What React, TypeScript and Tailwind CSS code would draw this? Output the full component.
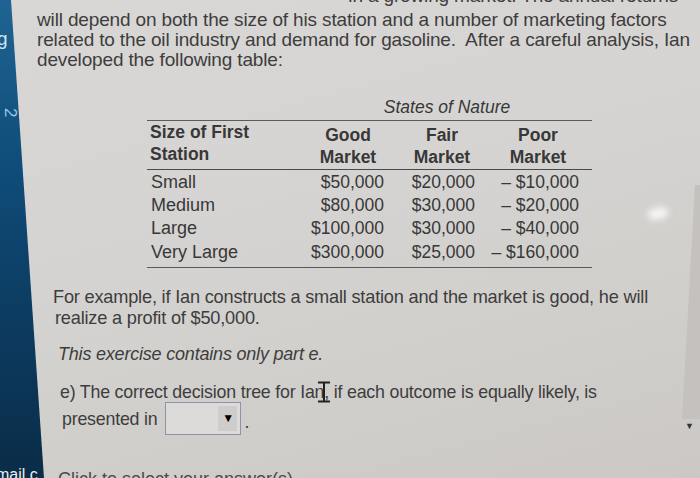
const rows = [
  { size: "Small", good: "$50,000", fair: "$20,000", poor: "– $10,000" },
  { size: "Medium", good: "$80,000", fair: "$30,000", poor: "– $20,000" },
  { size: "Large", good: "$100,000", fair: "$30,000", poor: "– $40,000" },
  { size: "Very Large", good: "$300,000", fair: "$25,000", poor: "– $160,000" },
];

function Cursor() {
  return (
    <svg className="absolute left-[317px] top-[381px]" width="14" height="23" viewBox="0 0 14 23">
      <path d="M1 1.5h12M7 1.5v19M1 20.5h12" stroke="#222" strokeWidth="2" fill="none" />
    </svg>
  );
}

export default function App() {
  return (
    <div
      className="relative w-[700px] h-[478px] overflow-hidden bg-[linear-gradient(180deg,#1f6492_0%,#0f4c79_35%,#0c3a5e_70%,#0a2c47_100%)]"
      style={{ fontFamily: '"Liberation Sans", Arial, sans-serif' }}
    >
      {/* sidebar bits peeking out */}
      <span className="absolute left-[-3px] top-[25px] text-[19px] text-[#cfe3f2]">g</span>
      <span className="absolute left-[6px] top-[100px] text-[17px] text-[#9ec6e6] rotate-90">2</span>
      <span className="absolute left-[-4px] top-[463px] text-[16px] text-[#e6eef5]">mail c</span>

      {/* question panel */}
      <div className="flex h-full flex-col bg-[linear-gradient(165deg,#d9d7d5_0%,#d6d4d2_40%,#d1cfcc_70%,#cbc8c5_100%)] [clip-path:polygon(11px_0,100%_0,100%_100%,44px_100%)] text-[#3d3d3d]">
        <div className="relative flex h-full flex-col">
          <div className="pl-[37px] mt-[-18px] text-[19px] leading-[20px] tracking-[-0.15px]">
            <p className="whitespace-nowrap text-right pr-[22px] leading-[28px]">in a growing market. The annual returns</p>
            <p className="whitespace-nowrap">will depend on both the size of his station and a number of marketing factors</p>
            <p className="whitespace-nowrap">related to the oil industry and demand for gasoline.&nbsp; After a careful analysis, Ian</p>
            <p className="whitespace-nowrap">developed the following table:</p>
          </div>

          {/* payoff table */}
          <div className="ml-[147px] mt-[26px] w-[445px] text-[17.5px] text-[#383838]">
            <div className="pl-[234px] w-[366px] text-center italic leading-[22px]">States of Nature</div>
            <div className="border-t-[1.5px] border-[#5a5a5a] mt-[2px]" />
            <div className="flex leading-[22px]">
              <div className="w-[153px] pl-[3px] font-bold">
                <div>Size of First</div>
                <div>Station</div>
              </div>
              <div className="w-[96px] text-center font-bold pt-[3px]">
                <div>Good</div>
                <div>Market</div>
              </div>
              <div className="w-[92px] text-center font-bold pt-[3px]">
                <div>Fair</div>
                <div>Market</div>
              </div>
              <div className="w-[100px] text-center font-bold pt-[3px]">
                <div>Poor</div>
                <div>Market</div>
              </div>
            </div>
            <div className="border-t-[1.5px] border-[#4a4a4a] mt-[1px]" />
            <div className="leading-[23.2px] pt-[1px] pb-[3px]">
              {rows.map((r) => (
                <div key={r.size} className="grid grid-cols-[153px_84px_91px_104px]">
                  <div className="pl-[4px] text-[18px]">{r.size}</div>
                  <div className="text-right">{r.good}</div>
                  <div className="text-right">{r.fair}</div>
                  <div className="text-right">{r.poor}</div>
                </div>
              ))}
            </div>
            <div className="border-t-[1.5px] border-[#5a5a5a]" />
          </div>

          <div className="pl-[53px] mt-[19px] text-[18.2px] leading-[21px] tracking-[-0.2px]">
            <p className="whitespace-nowrap">For example, if Ian constructs a small station and the market is good, he will</p>
            <p className="whitespace-nowrap pl-[2px]">realize a profit of $50,000.</p>
          </div>

          <p className="pl-[58px] mt-[15px] text-[18px] italic leading-[21px] tracking-[-0.2px]">
            This exercise contains only part e.
          </p>

          <div className="pl-[60px] mt-[17px] text-[17.8px] tracking-[-0.2px]">
            <p className="whitespace-nowrap leading-[21px]">
              e) The correct decision tree for Ian, if each outcome is equally likely, is
            </p>
            <div className="flex items-center pl-[2px] mt-[-2px]">
              <span className="mt-[3px]">presented in</span>
              <div className="ml-[8px] flex h-[33px] w-[76px] items-stretch justify-end border border-[#8e93a8] bg-[#dcdbda] p-[3px]">
                <div className="flex w-[19px] items-center justify-center bg-[#cfcdcc] text-[12px] text-black">▼</div>
              </div>
              <span className="ml-[3px] mt-[8px]">.</span>
            </div>
          </div>

          <div className="pl-[58px] mt-[30px] text-[18px] text-[#4a4a4a] whitespace-nowrap">
            Click to select your answer(s)
          </div>

          {/* scrollbar */}
          <div className="absolute right-0 top-[185px] h-[234px] w-[18px] bg-[#c4c1be] [clip-path:polygon(13px_0,100%_0,100%_100%,0_100%)]" />
          <span className="absolute right-[6px] top-[420px] text-[9px] text-[#333]">▼</span>

          {/* screen glare */}
          <div className="absolute left-[648px] top-[208px] h-[11px] w-[20px] rounded-full bg-white/80 blur-[3px] -rotate-12" />

          <Cursor />
        </div>
      </div>
    </div>
  );
}
